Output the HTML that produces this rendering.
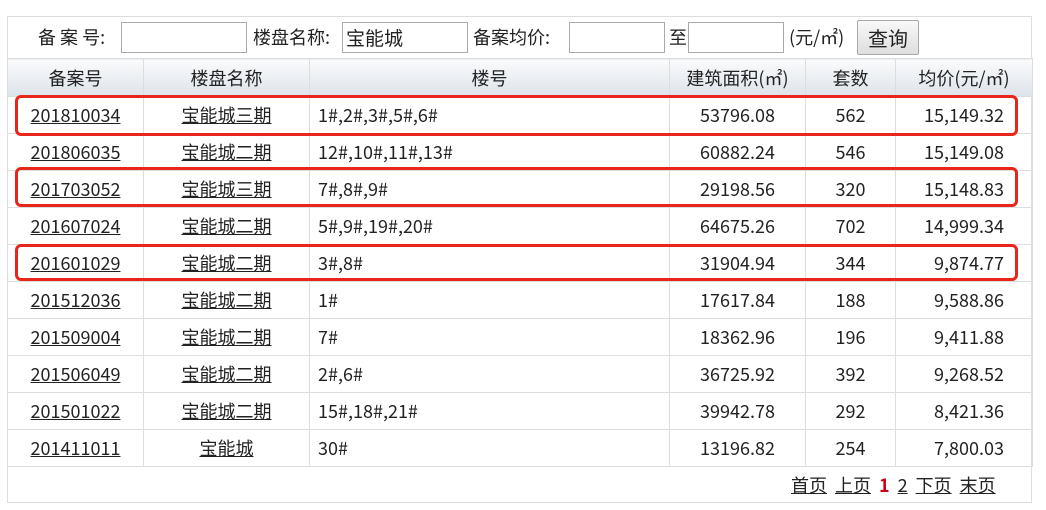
<!DOCTYPE html>
<html><head><meta charset="utf-8"><style>
body{margin:0;background:#fff;width:1046px;height:510px;position:relative;overflow:hidden;font-family:"Noto Sans CJK SC","Liberation Sans",sans-serif;color:#222;font-size:18px}
.outer{position:absolute;left:7px;top:16px;width:1025px;height:487px;border:1px solid #ddd;box-sizing:border-box}
.lbl{position:absolute;top:24px;font-size:18px;line-height:26px}
.inp{position:absolute;top:22px;height:31px;border:1px solid #aaa;box-sizing:border-box;background:#fff;font-size:19px;line-height:29px;padding-left:3px}
.btn{position:absolute;left:857px;top:20px;width:62px;height:35px;border:1px solid #aaa;box-sizing:border-box;background:linear-gradient(#f8f8f8,#dedede);border-radius:2px;text-align:center;line-height:33px;font-size:20px}
table{position:absolute;left:7px;top:58px;border-collapse:collapse;width:1025px;table-layout:fixed}
td,th{border:1px solid #ddd;height:36px;padding:0;text-align:center;font-weight:normal;font-size:18px;line-height:22px;vertical-align:middle}
th{background:linear-gradient(#fafbfc,#dde3ea);height:37px}
td a{color:#222;text-decoration:underline}
td.l{text-align:left;padding-left:8px}
td.r{text-align:right;padding-right:28px}
.red{position:absolute;left:15px;width:1003px;border:3px solid #e8261c;border-radius:6px;box-sizing:border-box}
.pg{position:absolute;top:473px;left:791px;font-size:18px;line-height:24px;white-space:nowrap}
.pg a{color:#222;text-decoration:underline;margin-right:8px}
</style></head><body>
<div class="outer"></div>
<div class="lbl" style="left:38px">备 案 号:</div>
<div class="inp" style="left:121px;width:126px"></div>
<div class="lbl" style="left:253px">楼盘名称:</div>
<div class="inp" style="left:342px;width:126px">宝能城</div>
<div class="lbl" style="left:473px">备案均价:</div>
<div class="inp" style="left:569px;width:96px"></div>
<div class="lbl" style="left:669px">至</div>
<div class="inp" style="left:688px;width:96px"></div>
<div class="lbl" style="left:789px">(元/㎡)</div>
<div class="btn">查询</div>
<table>
<colgroup><col style="width:136px"><col style="width:166px"><col style="width:360px"><col style="width:136px"><col style="width:90px"><col style="width:137px"></colgroup>
<tr><th>备案号</th><th>楼盘名称</th><th>楼号</th><th>建筑面积(㎡)</th><th>套数</th><th>均价(元/㎡)</th></tr>
<tr><td><a>201810034</a></td><td><a>宝能城三期</a></td><td class="l">1#,2#,3#,5#,6#</td><td>53796.08</td><td>562</td><td>15,149.32</td></tr>
<tr><td><a>201806035</a></td><td><a>宝能城二期</a></td><td class="l">12#,10#,11#,13#</td><td>60882.24</td><td>546</td><td>15,149.08</td></tr>
<tr><td><a>201703052</a></td><td><a>宝能城三期</a></td><td class="l">7#,8#,9#</td><td>29198.56</td><td>320</td><td>15,148.83</td></tr>
<tr><td><a>201607024</a></td><td><a>宝能城二期</a></td><td class="l">5#,9#,19#,20#</td><td>64675.26</td><td>702</td><td>14,999.34</td></tr>
<tr><td><a>201601029</a></td><td><a>宝能城二期</a></td><td class="l">3#,8#</td><td>31904.94</td><td>344</td><td class="r">9,874.77</td></tr>
<tr><td><a>201512036</a></td><td><a>宝能城二期</a></td><td class="l">1#</td><td>17617.84</td><td>188</td><td class="r">9,588.86</td></tr>
<tr><td><a>201509004</a></td><td><a>宝能城二期</a></td><td class="l">7#</td><td>18362.96</td><td>196</td><td class="r">9,411.88</td></tr>
<tr><td><a>201506049</a></td><td><a>宝能城二期</a></td><td class="l">2#,6#</td><td>36725.92</td><td>392</td><td class="r">9,268.52</td></tr>
<tr><td><a>201501022</a></td><td><a>宝能城二期</a></td><td class="l">15#,18#,21#</td><td>39942.78</td><td>292</td><td class="r">8,421.36</td></tr>
<tr><td><a>201411011</a></td><td><a>宝能城</a></td><td class="l">30#</td><td>13196.82</td><td>254</td><td class="r">7,800.03</td></tr>
</table>
<div class="red" style="top:95px;height:41px"></div>
<div class="red" style="top:167px;height:40px"></div>
<div class="red" style="top:244px;height:37px"></div>
<div class="pg"><a>首页</a><a>上页</a><b style="color:#d0021b;margin-right:8px">1</b><a>2</a><a>下页</a><a>末页</a></div>
</body></html>
